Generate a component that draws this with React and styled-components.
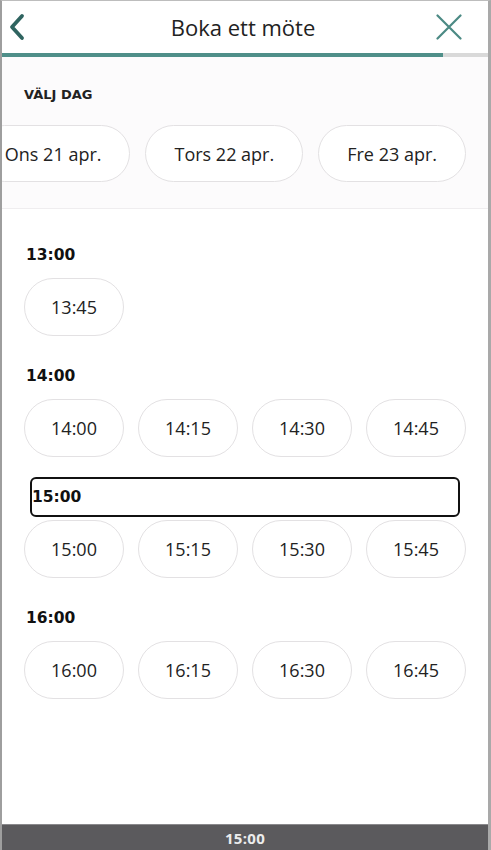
import React from "react";
import styled, { createGlobalStyle } from "styled-components";

const Global = createGlobalStyle`
  html, body { margin: 0; padding: 0; background: #fff; }
  body { font-family: "Open Sans", "Noto Sans", "Liberation Sans", sans-serif; color: #222; }
  * { box-sizing: border-box; }
`;

const Frame = styled.div`
  height: 100vh;
  display: flex;
  flex-direction: column;
  border-left: 2px solid #9e9e9e;
  border-right: 3px solid #a9a9a9;
  border-top: 1px solid #bdbdbd;
  background: #fff;
  overflow: hidden;
`;

const Header = styled.header`
  height: 52px;
  display: grid;
  grid-template-columns: 1fr auto 1fr;
  align-items: center;
  padding: 0 25px 0 1px;
  background: #fff;
`;

const IconButton = styled.button`
  justify-self: ${(p) => p.$side};
  border: 0;
  background: none;
  padding: 0;
  width: 28px;
  height: 28px;
  display: flex;
  align-items: center;
  justify-content: center;
  cursor: pointer;
`;

const Title = styled.h1`
  margin: 0 0 0 20px;
  font-size: 22px;
  font-weight: 400;
  color: #222;
`;

const Progress = styled.div`
  height: 4px;
  background: #d9d9d9;
`;

const ProgressFill = styled.div`
  height: 100%;
  background: #4f8f89;
`;

const DaySection = styled.section`
  background: #fcfbfc;
  padding-top: 30px;
  height: 152px;
  border-bottom: 1px solid #efedef;
`;

const SectionLabel = styled.div`
  padding-left: 22px;
  font-family: "DejaVu Sans", "Open Sans", sans-serif;
  font-size: 13px;
  font-weight: 700;
  color: #222;
  line-height: 16px;
`;

const DayRow = styled.div`
  margin-top: 22px;
  display: flex;
  justify-content: flex-end;
  gap: 15px;
  padding-right: 22px;
  overflow: hidden;
`;

const Pill = styled.button`
  flex: none;
  height: ${(p) => p.$h || 58}px;
  width: ${(p) => (p.$w ? p.$w + "px" : "auto")};
  padding: 0 ${(p) => (p.$w ? 0 : 28)}px;
  border: 1.5px solid #e3e1e3;
  border-radius: 30px;
  background: #fff;
  font-family: inherit;
  font-size: 18px;
  color: #222;
  white-space: nowrap;
  display: flex;
  align-items: center;
  justify-content: center;
`;

const Slots = styled.main`
  flex: 1;
  padding: 36px 22px 0 22px;
  display: flex;
  flex-direction: column;
`;

const Group = styled.div`
  display: flex;
  flex-direction: column;
  gap: 13px;
  margin-bottom: 30px;
`;

const HourLabel = styled.h2`
  position: relative;
  margin: 0;
  font-family: "DejaVu Sans", "Open Sans", sans-serif;
  font-size: 15.5px;
  font-weight: 700;
  line-height: 20px;
  color: #111;
  padding-left: ${(p) => (p.$focused ? 8 : 2)}px;
  &::after {
    content: "";
    display: ${(p) => (p.$focused ? "block" : "none")};
    position: absolute;
    left: 6px;
    right: 6px;
    top: -10px;
    bottom: -10px;
    border: 2px solid #111;
    border-radius: 6px;
  }
`;

const SlotRow = styled.div`
  display: flex;
  gap: 14px;
`;

const BottomBar = styled.footer`
  height: 26px;
  background: #5b5a5d;
  border-top: 1px solid #8a898c;
  color: #ececec;
  font-size: 15px;
  font-weight: 700;
  display: flex;
  align-items: center;
  justify-content: center;
  letter-spacing: 0.3px;
`;

const groups = [
  { hour: "13:00", slots: ["13:45"] },
  { hour: "14:00", slots: ["14:00", "14:15", "14:30", "14:45"] },
  { hour: "15:00", slots: ["15:00", "15:15", "15:30", "15:45"], focused: true },
  { hour: "16:00", slots: ["16:00", "16:15", "16:30", "16:45"] },
];

export default function App() {
  return (
    <>
      <Global />
      <Frame>
        <Header>
          <IconButton aria-label="Tillbaka" $side="start">
            <svg width="20" height="28" viewBox="0 0 20 28">
              <polyline points="15,3 5,14 15,25" fill="none" stroke="#2f6460" strokeWidth="3.8" strokeLinecap="round" strokeLinejoin="round" />
            </svg>
          </IconButton>
          <Title>Boka ett möte</Title>
          <IconButton aria-label="Stäng" $side="end">
            <svg width="26" height="26" viewBox="0 0 26 26">
              <path d="M1.5 1.5 L24.5 24.5 M24.5 1.5 L1.5 24.5" fill="none" stroke="#4b8a84" strokeWidth="2.2" strokeLinecap="round" />
            </svg>
          </IconButton>
        </Header>
        <Progress>
          <ProgressFill style={{ width: `${(441 / 486) * 100}%` }} />
        </Progress>
        <DaySection>
          <SectionLabel>VÄLJ DAG</SectionLabel>
          <DayRow>
            <Pill $h={57}>Ons 21 apr.</Pill>
            <Pill $h={57}>Tors 22 apr.</Pill>
            <Pill $h={57}>Fre 23 apr.</Pill>
          </DayRow>
        </DaySection>
        <Slots>
          {groups.map((g) => (
            <Group key={g.hour}>
              <HourLabel $focused={g.focused}>{g.hour}</HourLabel>
              <SlotRow>
                {g.slots.map((s) => (
                  <Pill key={s} $w={100}>{s}</Pill>
                ))}
              </SlotRow>
            </Group>
          ))}
        </Slots>
        <BottomBar>15:00</BottomBar>
      </Frame>
    </>
  );
}
